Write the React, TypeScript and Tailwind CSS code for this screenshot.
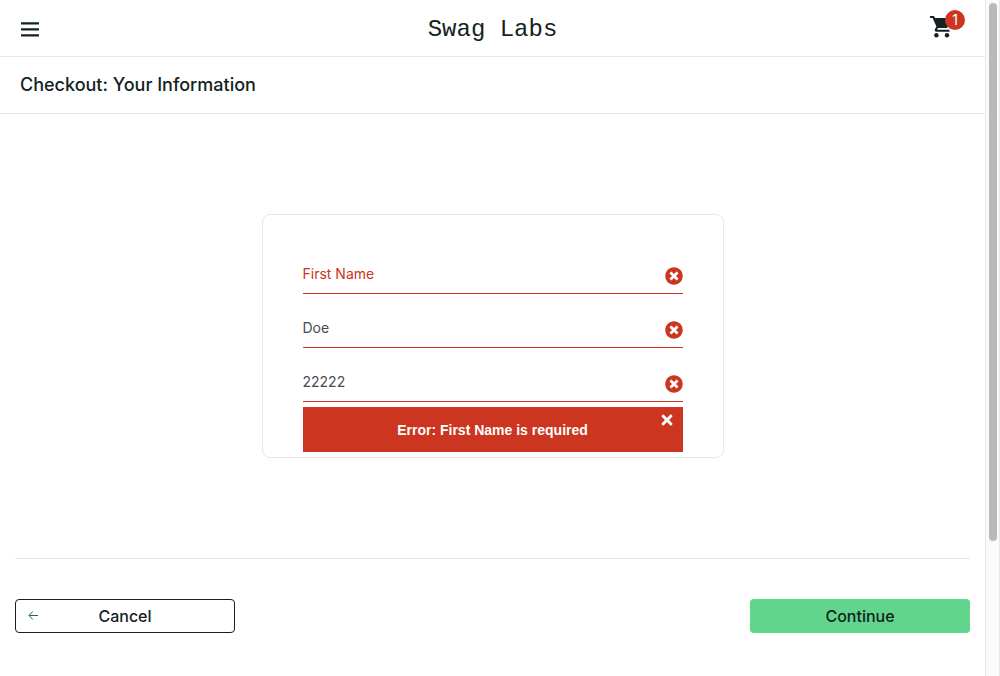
import { useState } from "react";
import { FaTimes, FaTimesCircle } from "react-icons/fa";

type FieldProps = {
  id: string;
  label: string;
  value: string;
  onChange: (value: string) => void;
};

function Field({ id, label, value, onChange }: FieldProps) {
  return (
    <div className="relative mb-[15px] last-of-type:mb-0">
      <input
        id={id}
        type="text"
        aria-label={label}
        placeholder={label}
        value={value}
        onChange={(event) => onChange(event.target.value)}
        className="block h-[39px] w-full border-b border-[#cc3520] bg-white pr-7 pb-0.5 text-sm text-[#484c55] outline-none placeholder:text-[#cc3520]"
      />
      <FaTimesCircle className="pointer-events-none absolute top-3 right-0 size-[18px] text-[#cc3520]" />
    </div>
  );
}

function CartIcon() {
  return (
    <svg className="block size-6" viewBox="0 0 24 24" fill="currentColor" aria-hidden="true">
      <path d="M1 2h3.9l1.2 2H21.6c.8 0 1.2.7.9 1.3l-3.9 7.6c-.4.8-1 1.200-1.800 1.200H9l-.9 1.700H20.500v2H7.500c-1.500 0-2.200-1.300-1.600-2.500l1.500-2.800L3.600 4H1z" />
      <circle cx="7.400" cy="21.300" r="2.200" />
      <circle cx="18" cy="21.300" r="2.200" />
    </svg>
  );
}

export default function App() {
  const [firstName, setFirstName] = useState("");
  const [lastName, setLastName] = useState("Doe");
  const [zip, setZip] = useState("22222");
  const [showError, setShowError] = useState(true);

  return (
    <div className="flex min-h-screen bg-white font-['Inter',sans-serif] text-[#132322]">
      <div className="flex min-w-0 flex-1 flex-col">
        <header>
          <div className="flex h-[57px] items-center justify-between border-b border-[#e8e8e8] px-5">
            <div className="flex flex-1 pt-1">
              <button type="button" aria-label="Open Menu">
                <svg className="block size-5" viewBox="0 0 20 20" fill="currentColor" aria-hidden="true">
                  <rect x="1" y="2.2" width="18" height="2.2" rx="0.4" />
                  <rect x="1" y="8.2" width="18" height="2.2" rx="0.4" />
                  <rect x="1" y="14.2" width="18" height="2.2" rx="0.4" />
                </svg>
              </button>
            </div>
            <div className="pt-1 font-['Liberation_Mono',monospace] text-2xl">Swag Labs</div>
            <div className="flex flex-1 justify-end">
              <a href="#cart" aria-label="Shopping cart" className="relative block pr-3 pb-1">
                <CartIcon />
                <span className="absolute -top-1 right-0 flex size-5 items-center justify-center rounded-full bg-[#cc3520] text-sm text-white">
                  1
                </span>
              </a>
            </div>
          </div>
          <div className="flex h-[57px] items-center border-b border-[#e8e8e8] px-5">
            <h1 className="text-lg font-medium">Checkout: Your Information</h1>
          </div>
        </header>

        <form className="flex flex-col px-[15px] pt-[100px]" onSubmit={(event) => event.preventDefault()}>
          <div className="mx-auto w-full max-w-[462px] rounded-lg border border-[#e8e8e8] px-10 pt-10 pb-[5px]">
            <div>
              <Field id="first-name" label="First Name" value={firstName} onChange={setFirstName} />
              <Field id="last-name" label="Last Name" value={lastName} onChange={setLastName} />
              <Field id="postal-code" label="Zip/Postal Code" value={zip} onChange={setZip} />
            </div>
            <div className="mt-[5px] h-[45px]">
              {showError && (
                <div role="alert" className="relative flex h-full items-center justify-center bg-[#cc3520]">
                  <h3 className="font-['Liberation_Sans',sans-serif] text-sm font-bold text-white">
                    Error: First Name is required
                  </h3>
                  <button
                    type="button"
                    aria-label="Dismiss error"
                    onClick={() => setShowError(false)}
                    className="absolute top-[5px] right-2 text-white"
                  >
                    <FaTimes className="size-4" />
                  </button>
                </div>
              )}
            </div>
          </div>

          <div className="mt-[100px] flex justify-between gap-4 border-t border-[#e8e8e8] pt-10">
            <button
              type="button"
              className="relative h-[34px] w-[220px] rounded border border-[#132322] bg-white font-medium"
            >
              <svg
                className="absolute top-[10px] left-3 size-[11px] text-[#1f6b45]"
                viewBox="0 0 11 11"
                fill="none"
                stroke="currentColor"
                strokeWidth="1"
                aria-hidden="true"
              >
                <path d="M10 5.5H1.2M4.8 1.5L1 5.5l3.8 4" />
              </svg>
              Cancel
            </button>
            <button type="submit" className="h-[34px] w-[220px] rounded bg-[#60d58b] font-medium">
              Continue
            </button>
          </div>
        </form>
      </div>

      <div className="flex w-[15px] flex-col border-x border-[#e8e8e8] bg-[#fafafa] px-[3px] pt-[3px]" aria-hidden="true">
        <div className="h-[80%] w-2 rounded-full bg-[#b9b9b9]" />
      </div>
    </div>
  );
}
